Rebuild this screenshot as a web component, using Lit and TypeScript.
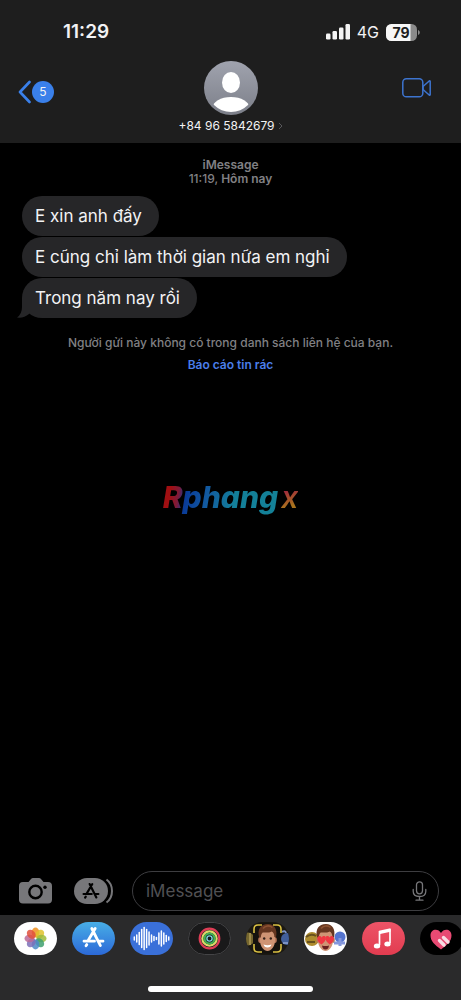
import { LitElement, html, css, svg } from "lit";
import { customElement } from "lit/decorators.js";

const petals = ["#f0901e", "#dfc22c", "#9dbb3a", "#3fa070", "#4c8ac6", "#7c70b8", "#bb6a98", "#e0503c"];
const wave = [3, 7, 12, 18, 22, 18, 13, 7, 4, 2, 11, 15, 11, 6, 3];

const appGlyph = (color: string) => svg`
  <g fill="none" stroke=${color} stroke-width="2.800" stroke-linecap="round">
    <path d="M23.200 6.500 16 18.800M19.800 6.500 28.400 23.600M12 19.200H22.500M27.500 19.200H31M14.800 22.600 14 23.800"/>
  </g>`;

const face = svg`
  <ellipse cx="14.200" cy="18" rx="2" ry="3" fill="#b9785a"/>
  <ellipse cx="28.800" cy="18" rx="2" ry="3" fill="#b9785a"/>
  <path d="M14 13c0-6 3.500-8 7.500-8s7.500 2 7.500 8v5.500c0 6-4 10.500-7.500 10.500S14 24.500 14 18.500z" fill="#cf9474"/>
  <path d="M13.200 15.500C11 7.500 14.500 2 22 2c6.500 0 9.800 5.500 8 13.500l-1.600-.5c0-3-1-4.500-2.700-5.500-2.300 1.500-6.700 1-9 1-1.400 1-1.800 3-1.800 5z" fill="#653620"/>
  <path d="M17 6.500c2-3 6.500-3.500 9.500-1" fill="none" stroke="#8c5232" stroke-width="1.600"/>`;

@customElement("app-root")
export class AppRoot extends LitElement {
  static styles = css`
    :host {
      display: block;
      font-family: Inter, "Noto Sans", sans-serif;
      color: #f2f2f4;
      background: #000;
    }
    * { box-sizing: border-box; }
    svg { display: block; flex: none; }
    button, input { font: inherit; color: inherit; background: none; border: 0; padding: 0; margin: 0; }
    a { text-decoration: none; color: inherit; }
    p { margin: 0; font: inherit; }
    .screen { position: relative; min-height: 100vh; display: flex; flex-direction: column; overflow: hidden; }
    .top { background: #1e1e1e; padding: 20px 0 7px; }
    .status { display: flex; justify-content: space-between; align-items: center; height: 24px; padding: 0 41px 0 63px; }
    .time { font-size: 19px; line-height: 24px; font-weight: 600; }
    .signals { display: flex; align-items: center; gap: 7px; font-size: 16px; line-height: 24px; }
    .nav { display: grid; grid-template-columns: 1fr auto 1fr; align-items: center; height: 72px; padding: 16px 30px 0 18px; }
    .back { display: flex; align-items: center; gap: 1px; justify-self: start; padding-top: 8px; }
    .badge { width: 22px; height: 22px; border-radius: 50%; background: #3a80ea; text-align: center; font-size: 12px; line-height: 22px; }
    .avatar { margin-left: 12px; }
    .video { justify-self: end; }
    .contact { display: flex; align-items: center; justify-content: center; gap: 3px; width: 100%; font-size: 12px; line-height: 20px; }
    .chat { flex: 1; padding: 15px 22px; }
    .meta { text-align: center; color: #808084; font-size: 12px; line-height: 14px; font-weight: 500; }
    .strong { font-weight: 600; }
    .bubbles { display: flex; flex-direction: column; align-items: flex-start; gap: 1px; margin: 10px 0 18px; }
    .bubble { position: relative; background: #262628; border-radius: 20px; padding: 8px 17px 8px 13px; font-size: 17px; line-height: 24px; }
    .tail { position: absolute; left: -5px; bottom: 0; }
    .report { display: block; width: max-content; margin: 7px auto 0; font-size: 12px; line-height: 16px; font-weight: 600; color: #4a7eea; }
    .mark { position: absolute; left: 0; right: 0; top: 50%; margin-top: -23px; display: flex; justify-content: center; align-items: baseline; gap: 2px; font-size: 30px; line-height: 40px; font-weight: 800; font-style: italic; pointer-events: none; }
    .mark span { color: transparent; background-clip: text; -webkit-background-clip: text; }
    .word { background-image: linear-gradient(100deg, #a00f12 0 8%, #7e1b3a 15%, #093a97 21%, #1259a0 38%, #137f99 62%, #148197); padding-right: 1px; }
    .end { background-image: linear-gradient(160deg, #a02c3c 35%, #a8721d 70%); font-weight: 600; }
    .compose { display: flex; align-items: center; padding: 0 22px 4px 19px; color: #77777a; }
    .drawer { margin: 0 18px 0 22px; }
    .field { flex: 1; min-width: 0; display: flex; align-items: center; height: 40px; border: 1px solid #3d3d40; border-radius: 20px; padding: 0 11px 0 13px; }
    .field input { flex: 1; min-width: 0; font-size: 17px; line-height: 24px; outline: 0; }
    .field input::placeholder { color: #505053; opacity: 1; }
    .tray { background: #2a2a2b; padding: 7px 0 8px 14px; }
    .apps { display: flex; gap: 15px; overflow: hidden; }
    .app { flex: none; }
    .handle { padding: 31px 14px 0 0; }
    .home { width: 165px; height: 6px; border-radius: 3px; background: #fff; margin: 0 auto; }
  `;

  private pill(label: string, fill: string, art: unknown, edge = "none") {
    return html`<button class="app" aria-label=${label}>
      <svg width="43" height="33" viewBox="0 0 43 33">
        <defs>
          <clipPath id="pill"><rect width="43" height="33" rx="16.500"/></clipPath>
          <linearGradient id="store" x2="0" y2="1"><stop stop-color="#48aee6"/><stop offset="1" stop-color="#2c69d8"/></linearGradient>
          <linearGradient id="music" x2="0" y2="1"><stop stop-color="#ed5467"/><stop offset="1" stop-color="#e23c50"/></linearGradient>
        </defs>
        <g clip-path="url(#pill)"><rect width="43" height="33" fill=${fill}/>${art}</g>
        <rect x=".5" y=".5" width="42" height="32" rx="16" fill="none" stroke=${edge}/>
      </svg>
    </button>`;
  }

  render() {
    return html`<main class="screen">
      <header class="top">
        <div class="status">
          <span class="time">11:29</span>
          <div class="signals">
            <svg width="24" height="16" viewBox="0 0 24 16" fill="#f4f4f4">
              <rect x="0" y="9.500" width="4.500" height="6" rx="1.200"/><rect x="6.500" y="7" width="4.500" height="8.500" rx="1.200"/>
              <rect x="13" y="3.500" width="4.500" height="12" rx="1.200"/><rect x="19.500" y="0" width="4.500" height="15.500" rx="1.200"/>
            </svg>
            <span>4G</span>
            <svg width="34" height="17" viewBox="0 0 34 17">
              <defs><clipPath id="cell"><rect width="31" height="17" rx="5.500"/></clipPath></defs>
              <g clip-path="url(#cell)"><rect width="31" height="17" fill="#8b8b8b"/><rect width="24.500" height="17" fill="#f7f7f7"/></g>
              <path d="M32 6c2.400.8 2.400 4.200 0 5z" fill="#8b8b8b"/>
              <text x="15" y="13.500" text-anchor="middle" font-size="14" font-weight="700" fill="#1e1e1e">79</text>
            </svg>
          </div>
        </div>
        <div class="nav">
          <button class="back" aria-label="5">
            <svg width="13" height="24" viewBox="0 0 13 24"><path d="M11.500 2 2 12l9.500 10" fill="none" stroke="#3a80ea" stroke-width="2.600" stroke-linecap="round" stroke-linejoin="round"/></svg>
            <span class="badge">5</span>
          </button>
          <svg class="avatar" width="54" height="54" viewBox="0 0 54 54">
            <defs><linearGradient id="av" x2="0" y2="1"><stop stop-color="#a0a3ae"/><stop offset="1" stop-color="#7c7f89"/></linearGradient>
            <clipPath id="disc"><circle cx="27" cy="27" r="24"/></clipPath></defs>
            <circle cx="27" cy="27" r="27" fill="url(#av)"/>
            <ellipse cx="27" cy="21.500" rx="9" ry="10.500" fill="#fff"/>
            <ellipse cx="27" cy="47" rx="18.500" ry="11" fill="#fff" clip-path="url(#disc)"/>
          </svg>
          <button class="video" aria-label="FaceTime">
            <svg width="29" height="20" viewBox="0 0 29 20" fill="none" stroke="#3d74cf" stroke-width="1.500" stroke-linejoin="round">
              <rect x=".8" y=".8" width="20" height="18" rx="3.600"/><path d="M21 8.500 27.200 3q1-.6 1 .6v12.800q0 1.200-1 .6L21 11.500z"/>
            </svg>
          </button>
        </div>
        <button class="contact">+84 96 5842679
          <svg width="5" height="8" viewBox="0 0 5 8"><path d="m1 1 3 3-3 3" fill="none" stroke="#58585b"/></svg>
        </button>
      </header>

      <section class="chat">
        <p class="meta strong">iMessage</p>
        <p class="meta">11:19, <span class="strong">Hôm nay</span></p>
        <div class="bubbles">
          <p class="bubble">E xin anh đấy</p>
          <p class="bubble">E cũng chỉ làm thời gian nữa em nghỉ</p>
          <p class="bubble">Trong năm nay rồi
            <svg class="tail" width="20" height="20" viewBox="0 0 20 20"><path d="M5 0v9q0 7-5 10.500 7 .8 12-3.500L20 8V0z" fill="#262628"/></svg>
          </p>
        </div>
        <p class="meta">Người gửi này không có trong danh sách liên hệ của bạn.</p>
        <a class="report" href="#">Báo cáo tin rác</a>
      </section>

      <div class="mark"><span class="word">Rphang</span><span class="end">x</span></div>

      <div class="compose">
        <button aria-label="Camera">
          <svg width="33" height="26" viewBox="0 0 33 26" fill="currentColor">
            <path d="M4 4h5.500L12 1q.8-1 2-1h6q1.200 0 2 1l2.500 3H29q4 0 4 4v13.500q0 4-4 4H4q-4 0-4-4V8q0-4 4-4z"/>
            <circle cx="16.500" cy="14" r="6.200" fill="none" stroke="#000" stroke-width="2.400"/><circle cx="26" cy="9.200" r="1.700" fill="#000"/>
          </svg>
        </button>
        <button class="drawer" aria-label="Apps">
          <svg width="40" height="26" viewBox="0 0 40 26">
            <rect width="34" height="26" rx="13" fill="#77777a"/>
            <path d="M32.500 1.500q5.500 4 5.500 11.500t-5.500 11.500" fill="none" stroke="#77777a" stroke-width="2"/>
            <g transform="translate(.2 1) scale(.78)">${appGlyph("#000")}</g>
          </svg>
        </button>
        <label class="field">
          <input type="text" placeholder="iMessage" aria-label="iMessage">
          <svg width="15" height="20" viewBox="0 0 15 20" fill="none" stroke="#77777a" stroke-width="1.300" stroke-linecap="round">
            <rect x="4.500" y=".8" width="6" height="12" rx="3"/><path d="M1.200 8.500v1.700q0 5.300 6.300 5.300t6.300-5.300V8.500M7.500 15.500V19M4 19.200h7"/>
          </svg>
        </label>
      </div>

      <footer class="tray">
        <div class="apps">
          ${this.pill("Photos", "#fff", svg`<g transform="translate(21.500 16.500)">${petals.map((c, i) => svg`<ellipse cx="0" cy="-6" rx="3.800" ry="5" fill=${c} fill-opacity=".85" transform=${`rotate(${i * 45})`}/>`)}</g>`)}
          ${this.pill("App Store", "url(#store)", appGlyph("#fff"))}
          ${this.pill("Audio", "#3a70d9", svg`<g stroke="#fff" stroke-width="1.500" stroke-linecap="round">${wave.map((h, i) => svg`<path d=${`M${4.3 + i * 2.46} ${16.5 - h / 2}v${h}`}/>`)}</g>`)}
          ${this.pill("Fitness", "#19191a", svg`<g fill="none" stroke-width="2.200"><circle cx="21.500" cy="16.500" r="9.800" stroke="#dd3d55"/><circle cx="21.500" cy="16.500" r="7.200" stroke="#dfd86a"/><circle cx="21.500" cy="16.500" r="5" stroke="#42b653"/><circle cx="21.500" cy="16.500" r="2.600" stroke="#7bd3dc" stroke-width="1.400"/></g>`, "#444446")}
          ${this.pill("Memoji", "#1b1812", svg`
            <circle cx="2" cy="17" r="6.500" fill="#75662f"/><path d="M4 11v12" stroke="#a08d4b" stroke-width="2"/>
            <circle cx="41" cy="17" r="6" fill="#425f9a"/><path d="M36 10q3-2 4 1M37 21h5" stroke="#7c92c3" stroke-width="2"/>
            <rect x="7" y="1.500" width="28" height="30" rx="6" fill="#15120e"/>${face}
            <circle cx="18.200" cy="16.500" r="1.200" fill="#35211a"/><circle cx="24.800" cy="16.500" r="1.200" fill="#35211a"/><path d="M17.500 22.500q4 1.500 8 0-.8 3-4 3t-4-3" fill="#fff"/>
            <path d="M8 11V7q0-4 4-4h4M27 3h4q4 0 4 4v4M35 22v4q0 4-4 4h-4M16 30h-4q-4 0-4-4v-4" fill="none" stroke="#d9c043" stroke-width="1.600"/>`)}
          ${this.pill("Stickers", "#fff", svg`
            <circle cx="8" cy="17" r="7" fill="#ad8c2e"/><path d="M2 15q5-4 10-1M3 20h8" stroke="#66501e" stroke-width="2" fill="none"/>
            <circle cx="36" cy="15" r="5.500" fill="#5574cf"/><path d="M30 21h11M36 16v8" stroke="#8597dc" stroke-width="3"/>
            ${face}<path d="M17.500 22.500c-3-2-4.800-4.500-4-7 .8-2.200 3.500-2 4.300 0 1-2 3.800-1.800 4 .3.200 2.700-1.800 5-4.300 6.700zM25.800 22.500c3-2 4.700-4.500 4-7-.8-2.200-3.500-2-4.300 0-1-2-3.800-1.800-4 .3-.2 2.700 1.800 5 4.300 6.700z" fill="#ef3742"/><path d="M18 23.500q3.500 1 7 0-.5 4-3.500 4t-3.500-4" fill="#692020"/>`)}
          ${this.pill("Music", "url(#music)", svg`<path d="M17 8.800 28.500 6.300v3.400L17 12.200z" fill="#fff"/><path d="M17.500 9v14M28 7v14" stroke="#fff" stroke-width="1.700"/><ellipse cx="15" cy="24" rx="3.200" ry="2.500" fill="#fff"/><ellipse cx="25.500" cy="22" rx="3.200" ry="2.500" fill="#fff"/>`)}
          ${this.pill("Digital Touch", "#000", svg`<path d="M21 27.500C15 23 10.500 19 10.500 13.500 10.500 6.500 18.500 6 21 11c2.500-5 10.500-4.500 10.500 2.500C31.500 19 27 23 21 27.500z" fill="#e84a73"/><path d="m19.500 18.500 4.500 4.500M23.500 15.500l4.500 4.500" stroke="#f8dce4" stroke-width="3.400" stroke-linecap="round"/>`)}
        </div>
        <div class="handle"><div class="home"></div></div>
      </footer>
    </main>`;
  }
}
